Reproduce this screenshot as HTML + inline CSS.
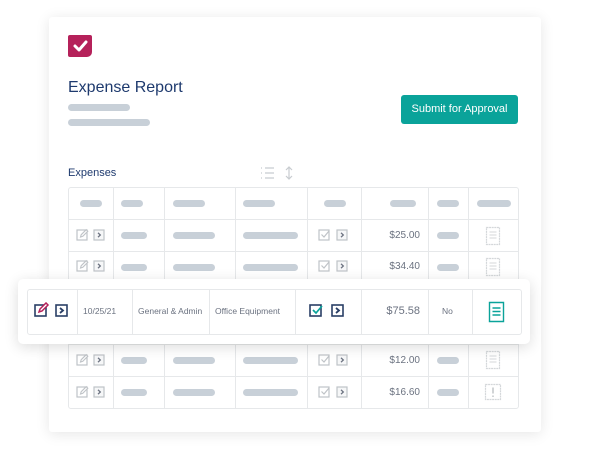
<!DOCTYPE html><html><head><style>
*{margin:0;padding:0;box-sizing:border-box}
body{width:607px;height:453px;background:#fff;font-family:"Liberation Sans",sans-serif;position:relative;overflow:hidden}
.a{position:absolute}
.card{left:49px;top:17px;width:492px;height:415px;background:#fff;box-shadow:0 2px 14px rgba(0,0,0,.10);border-radius:3px}
.bar{position:absolute;height:7px;border-radius:4px;background:#c8d0d8}
.vl{position:absolute;width:1px;background:#e6e8ea}
.hl{position:absolute;height:1px;background:#e6e8ea}
.t{position:absolute;font-size:10px;color:#6b7280}
</style></head><body>
<svg width="0" height="0" style="position:absolute"><defs>
<g id="ed"><rect x="1" y="2" width="10" height="10" fill="none" stroke="#bfc3c7" stroke-width="1.2"/><path d="M4.5 9l.7-2.3 5-5 1.6 1.6-5 5z" fill="#fff" stroke="#bfc3c7" stroke-width="1.1"/></g>
<g id="ar"><rect x="1" y="2" width="10" height="10" fill="#f6f7f8" stroke="#bfc3c7" stroke-width="1.2"/><path d="M5 4.8l2.3 2.2L5 9.2" fill="none" stroke="#6b7280" stroke-width="1.3"/></g>
<g id="ck"><rect x="1" y="2" width="10" height="10" fill="none" stroke="#bfc3c7" stroke-width="1.2"/><path d="M3.5 6.5l2.5 2.5 5-6" fill="none" stroke="#bfc3c7" stroke-width="1.2"/></g>
<g id="rc"><path d="M1.5 1.5h13v17h-13z" fill="none" stroke="#d4d7da" stroke-width="1.2" stroke-dasharray="2 .6"/><path d="M4.5 6h7M4.5 9h7M4.5 12h7" stroke="#d4d7da" stroke-width="1"/></g>
</defs></svg>
<div class="a card"></div>
<div class="a" style="left:68px;top:35px;width:24px;height:22px;background:#b5215a;border-radius:2px 2px 5px 2px"></div>
<svg class="a" style="left:68px;top:35px" width="24" height="22"><path d="M7 11l4 4 7-8" stroke="#fff" stroke-width="3" fill="none" stroke-linecap="round" stroke-linejoin="round"/></svg>
<div class="a" style="left:68px;top:79px;font-size:16px;color:#1e3a6e">Expense Report</div>
<div class="bar" style="left:68px;top:104px;width:62px"></div>
<div class="bar" style="left:68px;top:119px;width:82px"></div>
<div class="a" style="left:401px;top:95px;width:117px;height:29px;background:#0aa39a;border-radius:3px;color:#fff;font-size:11px;text-align:center;line-height:29px">Submit for Approval</div>
<div class="a" style="left:68px;top:167px;font-size:11px;color:#1e3a6e">Expenses</div>
<svg class="a" style="left:259px;top:165px" width="40" height="16"><g stroke="#c8ccd0" stroke-width="1.2" fill="none"><path d="M2 3h1M6 3h9M2 8h1M6 8h9M2 13h1M6 13h9M30 2v12M27 5l3-3 3 3M27 11l3 3 3-3"/></g></svg>
<div class="a" style="left:68px;top:187px;width:451px;height:222px;border:1px solid #e6e8ea;border-radius:3px"></div>
<div class="vl" style="left:113px;top:187px;height:222px"></div>
<div class="vl" style="left:164px;top:187px;height:222px"></div>
<div class="vl" style="left:235px;top:187px;height:222px"></div>
<div class="vl" style="left:307px;top:187px;height:222px"></div>
<div class="vl" style="left:361px;top:187px;height:222px"></div>
<div class="vl" style="left:428px;top:187px;height:222px"></div>
<div class="vl" style="left:468px;top:187px;height:222px"></div>
<div class="hl" style="left:68px;top:219px;width:451px"></div>
<div class="hl" style="left:68px;top:251px;width:451px"></div>
<div class="hl" style="left:68px;top:283px;width:451px"></div>
<div class="hl" style="left:68px;top:344px;width:451px"></div>
<div class="hl" style="left:68px;top:376px;width:451px"></div>
<div class="bar" style="left:80px;top:200px;width:22px"></div>
<div class="bar" style="left:121px;top:200px;width:22px"></div>
<div class="bar" style="left:173px;top:200px;width:32px"></div>
<div class="bar" style="left:243px;top:200px;width:32px"></div>
<div class="bar" style="left:324px;top:200px;width:22px"></div>
<div class="bar" style="left:390px;top:200px;width:26px"></div>
<div class="bar" style="left:437px;top:200px;width:22px"></div>
<div class="bar" style="left:477px;top:200px;width:34px"></div>

<svg class="a" style="left:76px;top:228px" width="30" height="14"><use href="#ed"/><use href="#ar" x="17"/></svg>
<div class="bar" style="left:121px;top:232px;width:26px"></div><div class="bar" style="left:173px;top:232px;width:42px"></div><div class="bar" style="left:243px;top:232px;width:55px"></div>
<svg class="a" style="left:318px;top:228px" width="32" height="14"><use href="#ck"/><use href="#ar" x="18"/></svg>
<div class="t" style="left:362px;width:58px;text-align:right;top:230px">$25.00</div>
<div class="bar" style="left:437px;top:232px;width:22px"></div>
<svg class="a" style="left:485px;top:226px" width="16" height="20"><use href="#rc"/></svg>

<svg class="a" style="left:76px;top:259px" width="30" height="14"><use href="#ed"/><use href="#ar" x="17"/></svg>
<div class="bar" style="left:121px;top:264px;width:26px"></div><div class="bar" style="left:173px;top:264px;width:42px"></div><div class="bar" style="left:243px;top:264px;width:55px"></div>
<svg class="a" style="left:318px;top:259px" width="32" height="14"><use href="#ck"/><use href="#ar" x="18"/></svg>
<div class="t" style="left:362px;width:58px;text-align:right;top:261px">$34.40</div>
<div class="bar" style="left:437px;top:264px;width:22px"></div>
<svg class="a" style="left:485px;top:257px" width="16" height="20"><use href="#rc"/></svg>

<svg class="a" style="left:76px;top:353px" width="30" height="14"><use href="#ed"/><use href="#ar" x="17"/></svg>
<div class="bar" style="left:121px;top:357px;width:26px"></div><div class="bar" style="left:173px;top:357px;width:42px"></div><div class="bar" style="left:243px;top:357px;width:55px"></div>
<svg class="a" style="left:318px;top:353px" width="32" height="14"><use href="#ck"/><use href="#ar" x="18"/></svg>
<div class="t" style="left:362px;width:58px;text-align:right;top:355px">$12.00</div>
<div class="bar" style="left:437px;top:357px;width:22px"></div>
<svg class="a" style="left:485px;top:350px" width="16" height="20"><use href="#rc"/></svg>

<svg class="a" style="left:76px;top:385px" width="30" height="14"><use href="#ed"/><use href="#ar" x="17"/></svg>
<div class="bar" style="left:121px;top:389px;width:26px"></div><div class="bar" style="left:173px;top:389px;width:42px"></div><div class="bar" style="left:243px;top:389px;width:55px"></div>
<svg class="a" style="left:318px;top:385px" width="32" height="14"><use href="#ck"/><use href="#ar" x="18"/></svg>
<div class="t" style="left:362px;width:58px;text-align:right;top:387px">$16.60</div>
<div class="bar" style="left:437px;top:389px;width:22px"></div>
<svg class="a" style="left:484px;top:383px" width="18" height="18"><path d="M1.5 1.5h15v15h-15z" fill="none" stroke="#d4d7da" stroke-width="1.2" stroke-dasharray="2 .6"/><path d="M9 4.5v6M9 12.5v1.5" stroke="#b8bcc0" stroke-width="1.3"/></svg>

<div class="a" style="left:18px;top:279px;width:512px;height:65px;background:#fff;border-radius:5px;box-shadow:0 3px 14px rgba(0,0,0,.14)"></div>
<div class="a" style="left:27px;top:289px;width:495px;height:46px;border:1px solid #e6e8ea;border-radius:3px"></div>
<div class="vl" style="left:77px;top:289px;height:46px"></div>
<div class="vl" style="left:132px;top:289px;height:46px"></div>
<div class="vl" style="left:209px;top:289px;height:46px"></div>
<div class="vl" style="left:295px;top:289px;height:46px"></div>
<div class="vl" style="left:361px;top:289px;height:46px"></div>
<div class="vl" style="left:428px;top:289px;height:46px"></div>
<div class="vl" style="left:472px;top:289px;height:46px"></div>
<svg class="a" style="left:34px;top:302px" width="40" height="16"><rect x="1" y="3" width="11" height="11" fill="none" stroke="#2a3f66" stroke-width="1.6"/><path d="M5 10l1-3 6-6 2 2-6 6z" fill="#fff" stroke="#b5215a" stroke-width="1.5"/><rect x="22" y="3" width="11" height="11" fill="none" stroke="#2a3f66" stroke-width="1.6"/><path d="M26 6l3 2.5-3 2.5" fill="none" stroke="#2a3f66" stroke-width="1.8"/></svg>
<div class="t" style="left:83px;top:306px;font-size:8.5px">10/25/21</div>
<div class="t" style="left:138px;top:306px;font-size:8.5px">General &amp; Admin</div>
<div class="t" style="left:215px;top:306px;font-size:8.5px">Office Equipment</div>
<svg class="a" style="left:309px;top:303px" width="40" height="16"><rect x="1" y="2" width="11" height="11" fill="none" stroke="#2a3f66" stroke-width="1.6"/><path d="M4 7l3 3 6-7" fill="none" stroke="#0aa39a" stroke-width="1.7"/><rect x="23" y="2" width="11" height="11" fill="none" stroke="#2a3f66" stroke-width="1.6"/><path d="M27 5l3 2.5-3 2.5" fill="none" stroke="#2a3f66" stroke-width="1.8"/></svg>
<div class="t" style="left:362px;width:58px;text-align:right;top:305px;font-size:11px">$75.58</div>
<div class="t" style="left:442px;top:306px;font-size:8.5px">No</div>
<svg class="a" style="left:488px;top:301px" width="18" height="22"><path d="M1.5 1.5h14v19h-14zM4.5 7h8M4.5 10.5h8M4.5 14h8" fill="none" stroke="#0aa39a" stroke-width="1.4"/></svg>
</body></html>
